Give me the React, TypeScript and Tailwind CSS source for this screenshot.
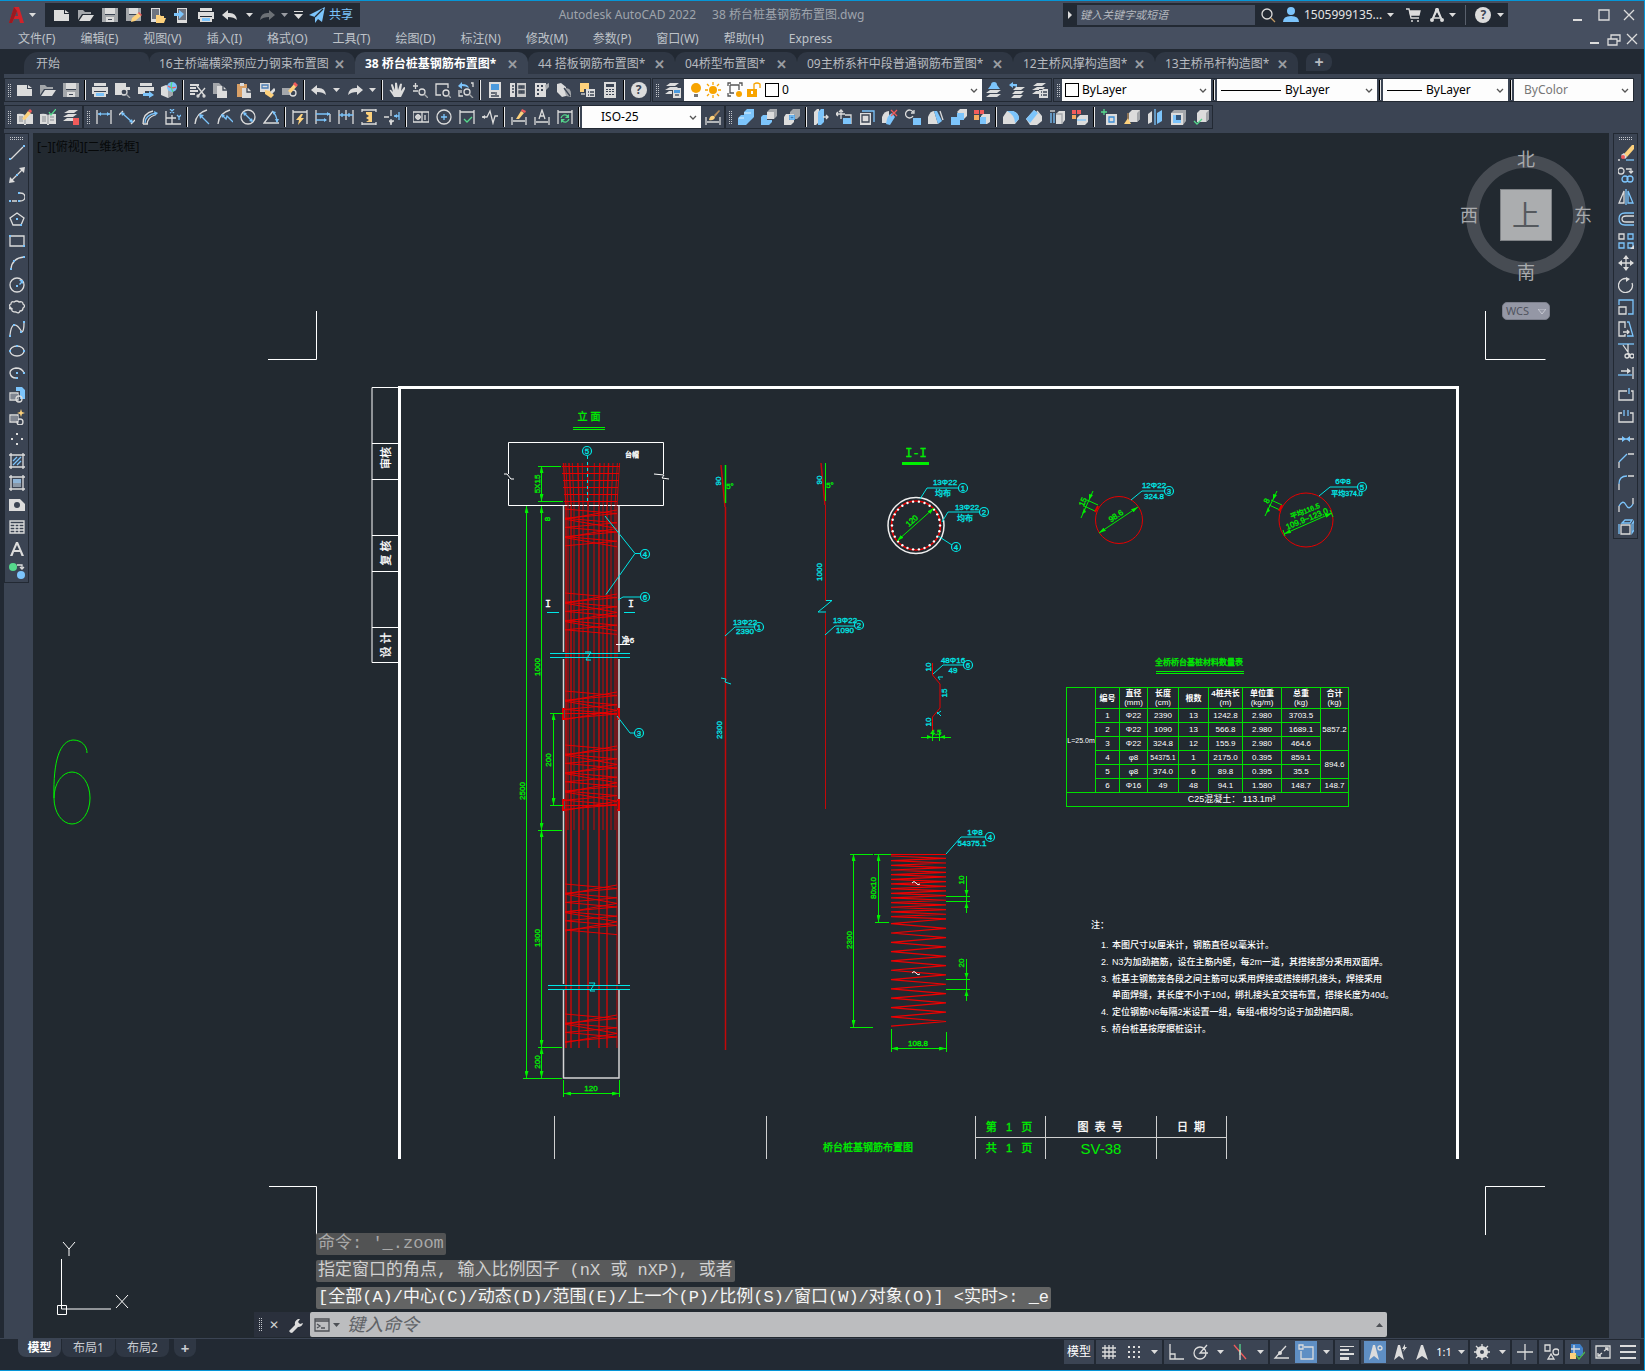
import React from "react";

type Part = ["f" | "s", string, string];

const W = "#dcdcdc";
const A = "#a4a7ab";
const B = "#7cc4fb";
const Y = "#fdd17c";
const R = "#f15b5b";
const G = "#55d88c";
const D = "#3b4453";
const O = "#f7a400";

const circ = (x: number, y: number, r: number) =>
  `M${x - r} ${y}a${r} ${r} 0 1 0 ${2 * r} 0a${r} ${r} 0 1 0 ${-2 * r} 0z`;

const icons: Record<string, Part[]> = {
  new: [["f", W, "M0 3h10v4h5v7H0zM11 3l4 3h-4z"]],
  open: [["f", A, "M0 3h5l2 2h6v2H4L0 13z"], ["f", W, "M5 8h11l-4 6H1z"]],
  save: [["f", A, "M0 1h16v14H0z"], ["f", W, "M3 1h10v6H3zM4 10h8v5H4z"], ["f", D, "M3 7h10v1H3zM6 12h4v1H6z"]],
  saveAs: [["f", A, "M0 1h15v13H0z"], ["f", W, "M3 1h9v6H3z"], ["f", D, "M3 7h9v1H3z"], ["f", Y, "M5 15l1-4 6-5 3 3-6 5z"], ["f", R, "M12 6l1-1 3 3-1 1z"]],
  openWeb: [["f", W, "M1 1h9v14H1z"], ["f", "#6e7480", "M2 2h7v10H2z"], ["f", Y, "M6 8h4l1 1h3v2h2l-2 5H6z"]],
  saveWeb: [["f", W, "M3 1h10v15H3z"], ["f", "#6e7480", "M4 2h8v11H4z"], ["f", B, "M0 6h5V3l5 4-5 5V9H0z"]],
  print: [["f", W, "M2 1h12v3H2zM0 5h16v7h-2V9H2v3H0z"], ["f", W, "M2 10h12v5H2z"], ["f", B, "M4 11h8v3H4z"]],
  preview: [["f", W, "M0 1h11v4h4v3h-3a5 5 0 0 0-6 5H0z"], ["f", D, circ(9, 10, 3)], ["s", W, circ(9, 10, 3)], ["s", A, "M11 12l4 4"]],
  publish: [["f", W, "M2 1h12v3H2zM0 5h16v4H7v3H0z"], ["f", B, "M5 11h6V9l5 4-5 3v-2H5z"]],
  globe: [["f", W, "M0 5l5-2 7 3v7l-5 3-7-3z"], ["f", A, "M7 8l5-2v7l-5 3z"], ["f", B, circ(11, 5, 5)], ["s", R, "M7 4q4 3 8 1"], ["s", G, "M11 0q-2 5 1 10"]],
  cut: [["f", W, "M0 2h9v2H0zM0 5h6v2H0zM0 8h8v2H0zM0 11h5v2H0z"], ["s", W, "M7 4l7 9M15 6l-7 8"], ["s", W, circ(8, 14, 1) + circ(14, 14, 1)]],
  copy: [["f", A, "M0 1h6l3 3v8H0z"], ["f", W, "M4 4h6l4 4v8H4z"], ["s", D, "M10 4v4h4"]],
  paste: [["f", "#d9a066", "M1 2h10v13H1z"], ["f", W, "M4 1h4v3H4zM6 6h6l3 3v7H6z"], ["s", D, "M11 6v4h4"]],
  match: [["f", W, "M1 1h10v9H1z"], ["s", "#4c7eb5", "M3 3h6v3H3z"], ["f", Y, "M6 8l5 1 4 4-3 3-6-4z"], ["f", W, "M11 10l4-4 2 2-4 4z"]],
  blockEdit: [["f", A, "M0 6h9v7H0z"], ["s", W, circ(11, 11, 3)], ["f", Y, "M6 9l6-7 3 2-6 7z"], ["f", R, "M11 2l2-2 3 3-2 2z"]],
  undo: [["f", W, "M0 8l6-5v3q8-1 9 7-3-3-9-3v3z"]],
  redo: [["f", W, "M16 8l-6-5v3q-8-1-9 7 3-3 9-3v3z"]],
  hand: [["f", W, "M5 15L1 9q-1-2 1-1l2 2-2-7q1-2 2 0l2 5V1q1-1 2 0l1 7 2-6q1-1 2 0l-1 7 3-4q2 0 1 2l-4 8z"]],
  zoomRt: [["s", W, "M1 4h5M3.500 1v6M1 9h5" + circ(10, 10, 3)], ["s", A, "M12 12l4 4"]],
  zoomWin: [["s", W, "M6 13H1V2h12v4" + circ(11, 11, 3)], ["s", A, "M13 13l3 3"]],
  zoomPrev: [["f", B, "M0 4l4-4v2q6 0 7 4-3-2-7-2v3z"], ["s", W, "M13 1h2v4M1 8v6h4M3 8v3" + circ(9, 10, 3)], ["s", A, "M11 12l4 4"]],
  props: [["f", W, "M2 0h12v16H2z"], ["f", "#4a9ade", "M4 2h8v6H4z"], ["s", D, "M4 11h4M9 10v3M4 14h8"]],
  design: [["f", W, "M0 1h5v14H0z"], ["f", "#c9c9c9", "M7 1h9v14H7z"], ["s", D, "M2 4h2M2 7h2M2 10h2M9 4h2v2H9zM12 4h2v2h-2zM9 9h2v2H9zM12 9h2v2h-2z"]],
  palette: [["f", W, "M2 1h11v14H2z"], ["f", D, "M4 3h2v2H4zM8 3h2v2H8zM4 7h2v2H4zM8 7h2v2H8zM4 11h2v2H4z"], ["f", A, "M12 3l4-2v4l-3 3z"]],
  sheet: [["f", W, "M1 2l4-1 5 4v9l-4 1-5-5z"], ["f", A, "M8 6q7-1 7 6v3l-5-1z"], ["s", D, "M8 6l6 8"]],
  markup: [["f", Y, "M1 1h9v6H5v3H1z"], ["f", W, "M7 7h9v8H7z"], ["s", D, "M9 10h1M11 10h4M9 13h1M11 13h4"], ["s", W, "M2 12h4"]],
  calc: [["f", W, "M2 0h12v16H2z"], ["f", D, "M4 2h8v3H4zM4 7h2v1H4zM7 7h2v1H7zM10 7h2v1h-2zM4 9h2v1H4zM7 9h2v1H7zM10 9h2v1h-2zM4 12h2v1H4zM7 12h2v1H7zM10 12h2v1h-2z"]],
  layerProps: [["f", W, "M5 1h9l-4 3H1zM5 5h8l-3 3H0zM4 9h3v3H0z"], ["f", W, "M8 6h8v10H8z"], ["f", "#4a9ade", "M9 8h6v3H9z"], ["s", D, "M10 13h4"]],
  layerCur: [["f", B, "M5 3a3 3 0 1 1 6 0l3 4H2z"], ["f", W, "M4 8h11l-4 3H0zM4 12h11l-4 3H0z"]],
  layerPrev: [["f", B, "M0 3l4-3v2h4v3q-2-1-4-1v2z"], ["f", W, "M7 5h9l-4 3H4zM6 9h9l-3 3H3zM5 13h9l-3 3H2z"]],
  layerState: [["f", W, "M5 1h9l-4 3H1zM5 5h8l-3 3H0zM4 9h3v3H0zM7 7h9v9H7z"], ["s", D, "M9 10h1M11 10h4M9 13h1M11 13h4"]],
  bookEdit: [["f", W, "M0 5q5-1 8 1 3-2 8-1v10H9v1H7v-1H0z"], ["s", A, "M2 8h4M2 10h4M2 12h4M8 6v9"], ["f", Y, "M5 10l6-8 3 2-6 7z"], ["f", R, "M11 2l2-2 2 2-1 2z"]],
  bookCheck: [["f", W, "M0 5q5-1 8 1 3-2 8-1v10H9v1H7v-1H0z"], ["s", A, "M2 8h4M2 10h4M2 12h4M8 6v9M10 8h4M10 11h4"], ["s", G, "M9 3l2 3 5-6"]],
  layerErase: [["f", W, "M6 1h9l-4 3H1zM5 5h9l-4 3H0zM4 9h6v3H0z"], ["f", R, "M10 9h6v7h-6z"]],
  dimLin: [["s", W, "M1 1v14M15 1v14"], ["s", B, "M2 5h12"], ["f", B, "M2 5l3-2v4zM14 5l-3-2v4z"]],
  dimAli: [["s", W, "M0 6l4-4M12 15l4-4"], ["s", B, "M3 4l10 9"], ["f", B, "M2 3l4 1-3 3zM14 14l-4-1 3-3z"]],
  dimArc: [["s", W, "M1 15q0-11 10-13M5 15q1-7 8-9M1 15h5"], ["s", B, "M3 14Q3 6 14 4"], ["f", B, "M12 2l4 2-3 3z"]],
  dimOrd: [["s", W, "M1 2v13h15M1 9h10M7 6v9"], ["s", B, "M5 0l4 4M9 0L5 4M12 6l2 2 2-2M14 8v3"]],
  dimRad: [["s", W, "M1 15Q2 4 13 1"], ["s", B, "M6 6l9 9"], ["f", B, "M5 5l5 1-4 4z"]],
  dimJog: [["s", W, "M1 15Q2 4 13 1"], ["s", B, "M5 6l4 4 1-3 6 6"], ["f", B, "M4 5l4 1-3 3z"]],
  dimDia: [["s", W, circ(8, 8, 7)], ["s", B, "M4 4l8 8"], ["f", B, "M3 3l4 1-3 3zM13 13l-4-1 3-3z"]],
  dimAng: [["s", W, "M10 2L1 14h15"], ["s", B, "M10 3q4 4 4 10"], ["f", B, "M9 2l4 1-2 3zM14 14l-2-4h4z"]],
  dimQuick: [["s", W, "M1 1v14M15 1v14M1 3h14"], ["f", Y, "M9 5l-5 6h3l-1 5 6-7H9l2-4z"]],
  dimBase: [["s", W, "M1 1v14M15 5v8"], ["s", B, "M1 5h14M1 11h10"], ["f", B, "M15 5l-3-2v4zM12 11l-3-2v4z"]],
  dimCont: [["s", W, "M1 1v14M8 1v10M15 1v14"], ["s", B, "M1 6h14M4 4v4M11 4v4"]],
  dimSpace: [["s", W, "M1 1h14M1 3V0M15 3V0M1 15h14M1 13v3M15 13v3"], ["f", Y, "M5 3h6v10H5l3-2-3-2 3-2-3-2z"]],
  dimBreak: [["s", W, "M0 8h5M7 1v6M7 10v6M5 12h5"], ["f", W, "M7 16l-2-4h4z"], ["s", B, "M10 7h5M15 3v8"], ["f", B, "M10 7l3-2v4z"]],
  tol: [["s", W, "M0 3h16v10H0zM9 3v10" + circ(5, 8, 2)], ["s", W, "M5 5v6M2 8h6M12 6v5"]],
  center: [["s", W, circ(8, 8, 7)], ["s", B, "M8 5v6M5 8h6"]],
  inspect: [["s", W, "M1 1v14M15 1v14M1 3h14"], ["s", G, "M5 10l3 3 5-5"]],
  jogLine: [["s", W, "M0 8h5l3-6 3 12 2-7h3"], ["f", W, "M0 8l3-2v4z"]],
  dimEdit: [["s", W, "M1 8v8M15 8v8M2 12h12"], ["f", Y, "M5 10l5-8 3 2-5 6z"], ["f", R, "M10 2l1-2 4 2-1 2z"]],
  dimText: [["s", W, "M1 8v8M15 8v8M2 13h12M5 10l3-9 3 9M6 7h4"]],
  dimUpd: [["s", W, "M1 1v14M15 1v14M1 3h14"], ["s", G, "M4 9q2-5 7-2M12 10q-2 5-7 2"], ["f", G, "M12 5v4H8zM4 14v-4h4z"]],
  dimSty: [["s", W, "M1 8v8M15 8v8M2 13h12"], ["f", Y, "M4 11q1-5 5-4l1 1q-1 4-6 3z"], ["f", "#b98d5a", "M9 6l5-5 1 1-5 6z"]],
  union: [["f", B, "M6 3l3-3h7v8l-3 3-2 2-3 3H0V9l3-3h3z"], ["s", "#bfe2fd", "M6 4h7M1 9h5"]],
  subtract: [["f", B, "M0 8l2-2h4v5h5v2l-3 3H0z"], ["f", A, "M6 3l3-3h7v7l-3 3H6z"], ["f", W, "M6 3h7v7H6z"]],
  intersect: [["f", A, "M6 3l3-3h7v7l-3 3H6z"], ["f", W, "M0 8l2-3h8v8l-3 3H0z"], ["f", "#3d7cb8", "M5 6h6v5H5z"], ["s", B, "M6 7h4v3H6z"]],
  extrude: [["f", W, "M1 3l3-3h2v13l-3 3H1z"], ["f", B, "M5 3l3-3h3v13l-3 3H5z"], ["s", W, "M10 8h5M13 6l2 2-2 2"]],
  moveF: [["s", W, "M5 1v9M0 5h9M3 3l2-2 2 2M2 3L0 5l2 2"], ["s", W, "M9 6h6v9"], ["f", B, "M7 9h8v6H7z"]],
  offsetF: [["s", B, "M3 2h12v11"], ["f", W, "M1 4h11v12H1z"], ["s", D, "M3 6h7v7H3z"]],
  deleteF: [["f", W, "M0 8q2-6 7-6v12H0z"], ["f", B, "M4 15Q5 6 10 4l3 4-5 8z"], ["s", R, "M9 1l6 6M15 1L9 7"]],
  rotateF: [["s", W, "M8 3a4 4 0 1 0 0 4M9 1v3H6"], ["f", B, "M8 9h8v7H8z"]],
  taperF: [["f", W, "M0 8q2-6 6-6l4 13H0z"], ["f", B, "M6 2h3l5 10-4 3z"], ["s", W, "M12 2l3 9"]],
  copyF: [["f", W, "M6 3l3-3h7v7l-3 3z"], ["f", B, "M6 4h7v7H6z"], ["f", B, "M0 8h9v8H0z"]],
  colorF: [["f", R, "M0 1h5v4H0z"], ["f", R, "M6 1h4v4H6z"], ["f", "#f3a95e", "M0 6h5v5H0z"], ["f", W, "M7 7l2-2h7v8l-3 2H7z"], ["f", B, "M6 8h6v7H6z"]],
  fillet: [["f", W, "M0 8l4-6h6q6 2 6 8l-4 5H0z"], ["f", B, "M4 2h6q6 2 6 8l-4 4q0-8-8-12z"]],
  chamfer: [["f", W, "M0 10L8 1l8 6v5l-5 4H4z"], ["f", B, "M8 1l4 3-8 10-4-4z"], ["s", W, "M11 2l4 5"]],
  copyEdge: [["s", B, "M2 4v10M5 4v10"], ["s", W, "M1 2h5"], ["f", W, "M7 5l3-3h6v9l-3 4H7z"], ["s", A, "M7 5h6v10"]],
  colorEdge: [["f", R, "M0 1h4v4H0zM5 1h4v4H5z"], ["f", "#f3a95e", "M0 6h4v4H0z"], ["f", W, "M5 9l3-3h8v7l-3 3H5z"], ["s", B, "M5 11h9"]],
  imprint: [["s", G, "M0 3h6M3 0v6"], ["f", W, "M5 5h11v11H5z"], ["s", "#3d8fd6", "M8 8h5v5H8z"]],
  clean: [["f", W, "M5 4l3-3h8v9l-3 3H5z"], ["f", A, "M13 4l3-3v9l-3 3z"], ["f", Y, "M4 9l3 6H0z"], ["s", "#b98d5a", "M4 4v6"]],
  separate: [["f", W, "M1 5l4-3v11l-4 2z"], ["f", B, "M10 4l5-3v11l-5 3z"], ["s", B, "M8 0v16"]],
  shell: [["f", A, "M1 4l3-3h12v11l-3 4H1z"], ["f", W, "M1 4h12v12H1z"], ["f", "#34567a", "M3 6h8v8H3z"], ["f", B, "M3 6h3v5h5v3H3z"]],
  check: [["f", W, "M4 4l3-3h9v9l-3 3H4z"], ["f", A, "M13 4l3-3v9l-3 3z"], ["s", G, "M1 12l3 3 5-5"]],
  line: [["s", W, "M2 14L14 2"], ["f", B, "M0 13h2v2H0zM14 0h2v2h-2z"]],
  xline: [["s", W, "M2 14L14 2"], ["f", W, "M0 16l1-6 5 5zM16 0l-1 6-5-5z"], ["f", B, "M7 7h2v2H7z"]],
  pline: [["s", W, "M3 12h5M11 4q5 0 5 4t-5 4"], ["f", B, "M0 11h2v2H0zM9 3h2v2H9zM9 11h2v2H9z"]],
  polygon: [["s", W, "M8 2l7 5-3 7H4L1 7z"], ["f", B, "M7 7h2v2H7zM11 13h2v2h-2z"]],
  rect: [["s", W, "M1 3h14v10H1z"], ["f", B, "M0 2h2v2H0zM14 12h2v2h-2z"]],
  arc: [["s", W, "M2 14Q3 3 15 2"], ["f", B, "M1 13h2v2H1zM4 5h2v2H4zM14 1h2v2h-2z"]],
  circle: [["s", W, circ(8, 8, 7)], ["f", B, "M7 8h2v2H7zM10 3h4v4l-1-1-2 2-1-1 2-2z"]],
  cloud: [["s", W, "M2 9Q-1 6 2 5q0-3 3-2 3-2 5 0 4-1 4 2 3 2 0 4 0 3-3 3-1 3-4 1-5 0-4-3-3 0-3-1z"]],
  spline: [["s", W, "M1 14Q2 5 5 4t8 7q2-1 2-9"], ["f", B, "M0 14h2v2H0zM4 3h2v2H4zM11 10h2v2h-2zM14 0h2v2h-2z"]],
  ellipse: [["s", W, "M1 8a7 5 0 1 0 14 0a7 5 0 1 0-14 0z"], ["f", B, "M0 7h2v2H0zM14 7h2v2h-2zM7 2h2v2H7z"]],
  ellArc: [["s", W, "M15 8Q13 3 7 3 1 4 1 8q1 5 6 5"], ["f", B, "M14 7h2v2h-2zM7 7h2v2H7zM7 12h2v2H7z"]],
  insert: [["s", W, "M1 6h8v7H1z"], ["f", "#7f8590", "M2 7h7v5H2z"], ["f", B, "M7 0h6l3 3v9h-5V4H7z"], ["s", W, circ(10, 12, 3)]],
  block: [["s", W, "M1 6h8v7H1z" + circ(11, 13, 3)], ["f", "#7f8590", "M2 7h7v5H2z"], ["f", Y, "M12 0l1 3 3 1-3 1-1 3-1-3-3-1 3-1z"]],
  point: [["f", W, "M7 2h2v2H7zM2 7h2v2H2zM12 7h2v2h-2zM7 12h2v2H7z"]],
  hatch: [["s", W, "M0 2h16M0 14h16M2 0v16M14 0v16"], ["s", B, "M4 8l4-4M4 12l8-8M8 12l4-4"]],
  gradient: [["s", W, "M0 2h16M0 14h16M2 0v16M14 0v16"], ["f", "#8eb4d6", "M4 4h8v4H4z"], ["f", "#8a97a6", "M4 8h8v4H4z"]],
  region: [["f", W, "M0 2h11l5 5v7H0z"], ["f", D, circ(8, 8, 3)]],
  table: [["s", W, "M1 2h14v12H1zM1 5h14M1 8h14M1 11h14M6 5v9M10 5v9"]],
  text: [["f", W, "M7 1h2l6 14h-2.500L11 11H5l-1.500 4H1zM8 4L5.700 9h4.600z"]],
  addSel: [["f", G, circ(4, 4, 4)], ["f", B, circ(12, 12, 4)], ["s", W, "M8 2h5v4M11 4l2 2 2-2"]],
  erase: [["f", Y, "M6 9l8-9h2v4l-7 8z"], ["f", W, "M6 8l3 4-2 2-4-4z"], ["f", R, circ(5, 12, 2)], ["s", B, "M8 15h8"], ["s", W, "M0 15h2"]],
  copyObj: [["s", W, circ(3, 4, 3) + "M8 2h5v4M11 4l2 2 2-2"], ["s", B, circ(7, 12, 3) + circ(12, 12, 3)]],
  mirror: [["s", W, "M6 2v12H1z"], ["s", B, "M10 2v12h5zM8 0v16"]],
  offset: [["s", B, "M16 2H7Q1 2 1 8t6 6h9"], ["s", W, "M16 5H8Q4 5 4 8t4 3h8"]],
  array: [["s", W, "M1 1h5v5H1z"], ["s", B, "M10 1h5v5h-5zM1 10h5v5H1zM10 10h5v5h-5z"], ["f", W, "M16 12v4h-4z"]],
  move: [["s", W, "M8 1v14M1 8h14"], ["f", W, "M8 0l3 4H5zM8 16l3-4H5zM0 8l4-3v6zM16 8l-4-3v6z"]],
  rotate: [["s", W, "M10 2a7 7 0 1 0 4 4"], ["f", W, "M8 0l4 2-4 3z"]],
  scale: [["s", B, "M1 6V1h14v14h-5"], ["s", W, "M1 8h7v7H1z"]],
  stretch: [["s", W, "M7 7V1H1v14h6v-2M5 11h6M9 9l2 2-2 2"], ["s", B, "M9 1h2l4 14H9"]],
  trim: [["s", B, "M0 1h16"], ["s", W, "M5 2l7 10M10 1v10" + circ(9, 13, 2) + circ(14, 13, 2)]],
  extend: [["s", W, "M15 2v12M3 6h9"], ["f", W, "M13 6L9 3v6z"], ["s", B, "M0 10h14"]],
  breakPt: [["s", W, "M9 4H1v9h14V4h-2"], ["s", B, "M11 1v6"]],
  break: [["s", W, "M4 4H1v9h14V4h-3"], ["s", B, "M6 1v6M10 1v6"]],
  join: [["s", W, "M0 8h4M12 8h4"], ["s", B, "M4 8h8"], ["f", B, "M8 8L4 5v6zM8 8l4-3v6z"]],
  chamfer2: [["s", W, "M1 15V9M10 1h6"], ["s", B, "M1 9l8-8"]],
  fillet2: [["s", W, "M1 15V9M10 1h6"], ["s", B, "M1 9q0-8 8-8"]],
  blend: [["s", W, "M1 15V9M15 1v6"], ["s", B, "M1 9q4-7 7-1t7-1"]],
  explode: [["s", W, "M3 6h9v9H3z"], ["s", B, "M1 15V5M4 4l3-3h7l-2 3zM14 5v9l2-3V2z"]],
  bulb: [["f", O, circ(8, 6, 5)], ["f", "#777", "M6 12h4v3H6z"]],
  sun: [["f", O, circ(8, 8, 4)], ["s", O, "M8 0v3M8 13v3M0 8h3M13 8h3M2 2l2 2M14 2l-2 2M2 14l2-2M14 14l-2-2"]],
  freeze: [["s", "#555", "M1 4V1h3M12 1h3v3M1 11v3h3M3 3h9v5M3 3v8h4"], ["f", O, circ(12, 12, 3)]],
  lock: [["f", O, "M1 7h10v8H1z"], ["s", O, "M8 7V2q3-2 6 0v4"], ["f", "#fff", "M5 9h2v3H5z"]],
  chevron: [["s", "#555", "M5 7l3 3 3-3"]],
  magnifier: [["s", W, circ(7, 7, 5)], ["s", "#c29a62", "M11 11l4 4"]],
  user: [["f", B, circ(8, 4, 4) + "M0 15q0-6 8-6t8 6z"]],
  cart: [["s", W, "M1 2h3l2 9h8M5 8h9l1-4H4"], ["f", W, "M4 4h11l-1 4H5z" + circ(7, 14, 1) + circ(13, 14, 1)]],
  adsk: [["s", W, "M8 3L3 13M8 3l5 10M4 11h8"], ["f", W, circ(8, 3, 2) + circ(3, 13, 2) + circ(13, 13, 2)], ["f", W, "M7 1h2l4 10h-2L8 5l-3 6H3z"]],
  plane: [["f", B, "M0 8L16 0l-3 15-4-3-3 4v-6L0 8z"], ["s", "#222933", "M6 10l8-8"]],
  min: [["f", W, "M2 11h9v2H2z"]],
  max: [["s", W, "M3 3h10v10H3z"]],
  restore: [["s", W, "M2 8h9v6H2zM5 8V4h9v6h-3"]],
  close: [["s", W, "M3 3l10 10M13 3L3 13"]],
  wrench: [["f", W, "M1 14l6-6q-1-4 3-6l2 0-2 3 2 2 3-1q-1 4-5 4l-6 6q-2 0-3-2z"]],
  grid: [["s", W, "M4 1v14M8 1v14M12 1v14M1 4h14M1 8h14M1 12h14"]],
  snap: [["f", W, "M2 2h2v2H2zM7 2h2v2H7zM12 2h2v2h-2zM2 7h2v2H2zM7 7h2v2H7zM12 7h2v2h-2zM2 12h2v2H2zM7 12h2v2H7zM12 12h2v2h-2z"]],
  ortho: [["s", W, "M2 0v15h14M2 10h5v5"]],
  polar: [["s", W, circ(7, 9, 6) + "M15 9H7l7-8"]],
  iso: [["s", R, "M2 1l12 14"], ["s", G, "M8 0v11"], ["s", W, "M8 6v10"]],
  track: [["s", W, "M13 2L2 14h14"], ["f", W, circ(7, 9, 2)]],
  osnap: [["s", W, "M6 3h9v12H3V7M1 1h4v4H1z"]],
  lweight: [["f", W, "M1 2h14v1H1zM1 5h9v2H1zM1 9h14v2H1zM1 13h9v3H1z"]],
  annoVis: [["f", W, "M6 1h2l4 15-5-4-5 4z"], ["s", W, circ(13, 4, 2)]],
  annoAuto: [["f", W, "M6 1h2l4 15-5-4-5 4zM13 0l-3 5h2l-1 3 4-5h-2z"]],
  anno: [["f", W, "M7 1h2l5 15-6-4-6 4z"]],
  gear: [["s", W, "M8 0v16M0 8h16M2 2l12 12M14 2L2 14"], ["f", W, circ(8, 8, 6)], ["f", D, circ(8, 8, 2)]],
  plus: [["s", W, "M8 0v16M0 8h16"]],
  isolate: [["s", W, "M2 1h5v6H2zM5 15l3-5 3 5z" + circ(13, 8, 3)]],
  perf: [["f", "#3f7fc8", "M2 0h9l3 4v8H2z"], ["s", W, "M2 5h9M5 1v9"], ["f", Y, "M1 9h6v6H1z"], ["s", "#4cb050", "M7 11l3 4 6-7"]],
  clean2: [["s", W, "M1 2h14v12H1zM9 7l4-3M13 7V4h-3M7 9l-4 3M3 9v3h3"]],
  menu: [["f", W, "M0 1h16v2H0zM0 7h16v2H0zM0 13h16v2H0z"]],
  terminal: [["s", "#4d5055", "M1 2h14v12H1zM1 4h14M3 7l3 2-3 2M7 11h4"]],
};

const Icon: React.FC<{ name: string }> = ({ name }) => (
  <svg viewBox="0 0 16 16" className="h-4 w-4 shrink-0" aria-hidden="true">
    {(icons[name] ?? []).map(([kind, color, d], i) =>
      kind === "f" ? (
        <path key={i} d={d} fill={color} fillRule="evenodd" />
      ) : (
        <path key={i} d={d} fill="none" stroke={color} strokeWidth={1.3} />
      )
    )}
  </svg>
);

const Caret: React.FC<{ color?: string }> = ({ color = W }) => (
  <svg viewBox="0 0 7 4" className="h-1 w-[7px] shrink-0" aria-hidden="true">
    <path d="M0 0h7L3.500 4z" fill={color} />
  </svg>
);

const HelpMark = () => (
  <span className="flex h-4 w-4 items-center justify-center rounded-full bg-[#dcdcdc] text-[12px] leading-4 font-bold text-[#3b4453]">?</span>
);

const Grip: React.FC<{ vertical?: boolean }> = ({ vertical }) => (
  <span className={vertical ? "flex h-2 w-full items-center justify-center" : "flex w-2 items-center justify-center"}>
    <svg className={vertical ? "h-[3px] w-[13px]" : "h-[13px] w-[3px]"} aria-hidden="true">
      {[0, 2, 4, 6, 8, 10, 12].map((p) => (
        <g key={p} fill="#c3c6cb">
          <rect x={vertical ? p : 0} y={vertical ? 0 : p} width="1" height="1" />
          <rect x={vertical ? p : 2} y={vertical ? 2 : p} width="1" height="1" />
        </g>
      ))}
    </svg>
  </span>
);

const Bar: React.FC<{ items: string }> = ({ items }) => (
  <>
    {items.split(" ").map((name, i) => {
      if (name === "|") {
        return (
          <span key={i} className="flex w-[6px] justify-center py-px">
            <span className="w-px bg-black" />
            <span className="w-px bg-[#e8e8e8]" />
          </span>
        );
      }
      if (name === "v") {
        return (
          <button key={i} aria-label="more" className="flex w-[13px] items-center justify-center">
            <Caret />
          </button>
        );
      }
      return (
        <button key={i} aria-label={name} className="flex w-[23px] items-center justify-center">
          {name === "help" ? <HelpMark /> : <Icon name={name} />}
        </button>
      );
    })}
  </>
);

const Group: React.FC<{ children: React.ReactNode }> = ({ children }) => (
  <div className="flex h-6 shrink-0 border border-[#222933]">
    <Grip />
    {children}
  </div>
);

type ComboProps = { label: string; value: string; width: string; pad?: string; muted?: boolean; children?: React.ReactNode };

const Combo: React.FC<ComboProps> = ({ label, value, width, pad = "pl-1", muted, children }) => (
  <div className={`flex items-center bg-[#fdfdfd] ${width} ${pad}`}>
    {children}
    <select
      aria-label={label}
      disabled={muted}
      className={`min-w-0 flex-1 appearance-none bg-transparent text-[12px] opacity-100 outline-none ${muted ? "text-[#777]" : "text-black"}`}
    >
      <option>{value}</option>
    </select>
    <Icon name="chevron" />
  </div>
);

const Swatch = () => <span className="mx-[3px] h-[14px] w-[14px] shrink-0 border border-black bg-white" />;

const menus = ["文件(F)", "编辑(E)", "视图(V)", "插入(I)", "格式(O)", "工具(T)", "绘图(D)", "标注(N)", "修改(M)", "参数(P)", "窗口(W)", "帮助(H)", "Express"];

const fileTabs = [
  { name: "16主桥端横梁预应力钢束布置图", width: "w-[206px]" },
  { name: "38 桥台桩基钢筋布置图*", width: "w-[173px]", active: true },
  { name: "44 搭板钢筋布置图*", width: "w-[147px]" },
  { name: "04桥型布置图*", width: "w-[122px]" },
  { name: "09主桥系杆中段普通钢筋布置图*", width: "w-[216px]" },
  { name: "12主桥风撑构造图*", width: "w-[142px]" },
  { name: "13主桥吊杆构造图*", width: "w-[143px]" },
];

const TitleBar = () => (
  <header className="bg-[#464f60]">
    <div className="flex h-[27px] items-center justify-between">
      <div className="flex h-6 items-center">
        <button aria-label="Application menu" className="flex w-[45px] items-center gap-1 pl-[9px]">
          <svg viewBox="0 0 16 18" className="h-[18px] w-4" aria-hidden="true">
            <path d="M5 1h5l5 16h-4l-1-4H5l-2 4H0zM8 5L6 10h3z" fill="#d2232a" fillRule="evenodd" />
            <path d="M5 1l3 4-5 12H0z" fill="#9c1a20" />
          </svg>
          <Caret />
        </button>
        <div className="flex h-6 w-[315px] items-center gap-2 bg-[#222933] pl-[9px]">
          {["new", "open", "save", "saveAs", "openWeb", "saveWeb", "print", "undo"].map((n) => (
            <button key={n} aria-label={n}><Icon name={n} /></button>
          ))}
          <span className="flex items-center gap-[6px] text-[12px] whitespace-nowrap text-[#7cc4fb]">
            <Caret />
            <span className="opacity-40"><Icon name="redo" /></span>
            <Caret color="#9a9da3" />
            <svg viewBox="0 0 9 8" className="h-2 w-[9px]" aria-hidden="true"><path d="M0 0h9v1H0zM0 3h9L4.500 8z" fill={W} /></svg>
            <button className="flex items-center gap-1"><Icon name="plane" />共享</button>
          </span>
        </div>
      </div>
      <div className="flex gap-4 text-[12px] text-[#9fa4ac]">
        <span>Autodesk AutoCAD 2022</span>
        <span>38 桥台桩基钢筋布置图.dwg</span>
      </div>
      <div className="flex h-6 items-center">
        <div className="flex h-6 w-[445px] items-center bg-[#222933] text-[12px] text-[#e4e4e4]">
          <svg viewBox="0 0 4 8" className="mx-[5px] h-2 w-1" aria-hidden="true"><path d="M0 0l4 4-4 4z" fill={W} /></svg>
          <input
            aria-label="Search"
            placeholder="键入关键字或短语"
            className="h-5 w-[178px] bg-[#464f60] px-[3px] text-[11px] italic outline-none placeholder:text-[#b4b8be]"
          />
          <button aria-label="Find" className="ml-[5px]"><Icon name="magnifier" /></button>
          <button className="ml-[7px] flex items-center gap-[5px]"><Icon name="user" />1505999135...<Caret /></button>
          <button aria-label="Store" className="ml-[11px]"><Icon name="cart" /></button>
          <button aria-label="Apps" className="ml-2 flex items-center gap-1"><Icon name="adsk" /><Caret /></button>
          <span className="mx-[9px] h-5 w-px bg-[#59606c]" />
          <button aria-label="Help" className="flex items-center gap-[6px]"><HelpMark /><Caret /></button>
        </div>
        <div className="flex w-[136px] justify-end gap-[9px] pr-[7px]">
          <button aria-label="Minimize" className="pt-[2px]"><Icon name="min" /></button>
          <button aria-label="Maximize"><Icon name="max" /></button>
          <button aria-label="Close"><Icon name="close" /></button>
        </div>
      </div>
    </div>
    <nav className="flex h-[21px] items-center gap-px pl-[6px] text-[12px] text-[#bfc3c9]">
      {menus.map((m) => (
        <button key={m} className="px-3 leading-4 whitespace-nowrap">{m}</button>
      ))}
      <div className="ml-auto flex gap-[2px] pr-1">
        <button aria-label="Minimize drawing"><Icon name="min" /></button>
        <button aria-label="Restore drawing"><Icon name="restore" /></button>
        <button aria-label="Close drawing"><Icon name="close" /></button>
      </div>
    </nav>
  </header>
);

const FileTabs = () => (
  <nav className="flex h-[25px] items-end bg-[#222933] pl-6 text-[12px] text-[#b8bbc0]">
    <button className="h-[22px] w-[125px] rounded-tl-[14px] rounded-tr-[8px] bg-[#2f3744] pt-px pl-3 text-left">开始</button>
    {fileTabs.map((t) => (
      <div
        key={t.name}
        className={`flex h-[22px] items-center justify-between rounded-t-[10px] pt-[2px] pr-[10px] pl-[10px] whitespace-nowrap ${t.width} ${
          t.active ? "bg-[#3b4453] font-bold text-white" : "bg-[#2f3744]"
        }`}
      >
        <button>{t.name}</button>
        <button aria-label="Close tab" className="text-[13px] leading-4 font-bold text-[#9a9da2]">✕</button>
      </div>
    ))}
    <button aria-label="New tab" className="ml-2 h-[18px] w-[26px] self-center rounded-t-[8px] rounded-br-[8px] bg-[#2f3744] text-[16px] leading-[18px] font-bold">+</button>
  </nav>
);

const Toolbars = () => (
  <div className="flex flex-col gap-[3px] bg-[#3b4453] py-1">
    <div className="flex gap-px">
      <Group>
        <Bar items="new open save | print preview publish globe | cut copy paste match blockEdit | undo v redo v | hand zoomRt zoomWin zoomPrev | props design palette sheet markup calc | help" />
      </Group>
      <Group>
        <Bar items="layerProps" />
        <Combo label="Layer" value="0" width="w-[298px]">
          <span className="flex items-center gap-px">
            <Icon name="bulb" />
            <Icon name="sun" />
            <span className="w-1" />
            <Icon name="freeze" />
            <span className="w-px" />
            <Icon name="lock" />
          </span>
          <Swatch />
        </Combo>
        <Bar items="layerCur layerPrev layerState" />
      </Group>
      <Group>
        <Combo label="Color" value="ByLayer" width="w-[149px]" pad="pl-0">
          <Swatch />
        </Combo>
        <Bar items="|" />
        <Combo label="Linetype" value="ByLayer" width="w-[160px]">
          <span className="mr-1 h-px w-[60px] bg-black" />
        </Combo>
        <Bar items="|" />
        <Combo label="Lineweight" value="ByLayer" width="w-[125px]">
          <span className="mr-1 h-px w-[35px] bg-black" />
        </Combo>
        <Bar items="|" />
        <Combo label="Plot style" value="ByColor" width="w-[119px]" pad="pl-[10px]" muted />
      </Group>
    </div>
    <div className="flex">
      <Group>
        <Bar items="bookEdit bookCheck layerErase" />
      </Group>
      <Group>
        <Bar items="dimLin dimAli dimArc dimOrd | dimRad dimJog dimDia dimAng | dimQuick dimBase dimCont dimSpace dimBreak | tol center inspect jogLine | dimEdit dimText dimUpd |" />
        <Combo label="Dimension style" value="ISO-25" width="w-[119px]" pad="pl-[19px]" />
        <Bar items="dimSty" />
      </Group>
      <Group>
        <Bar items="union subtract intersect | extrude moveF offsetF deleteF rotateF taperF copyF colorF | fillet chamfer copyEdge colorEdge | imprint clean separate shell check" />
      </Group>
    </div>
  </div>
);

const SideBar: React.FC<{ items: string }> = ({ items }) => (
  <div className="flex w-[25px] flex-col border border-[#222933]">
    <Grip vertical />
    {items.split(" ").map((n) => (
      <button key={n} aria-label={n} className="flex h-[22px] items-center justify-center">
        <Icon name={n} />
      </button>
    ))}
  </div>
);

const GREEN = "#00f000";
const CYAN = "#00e6e6";
const RED = "#e60000";

type TProps = { x: number; y: number; c?: string; r?: number; s?: number; mono?: boolean; children: React.ReactNode };

const T: React.FC<TProps> = ({ x, y, c = GREEN, r, s = 8, mono, children }) => (
  <text
    x={x}
    y={y}
    fill={c}
    stroke={c}
    strokeWidth={0.3}
    fontSize={s}
    className={mono ? "font-['Liberation_Mono',monospace]" : undefined}
    textAnchor="middle"
    dominantBaseline="central"
    transform={r ? `rotate(${r} ${x} ${y})` : undefined}
  >
    {children}
  </text>
);

const P: React.FC<{ d: string; c?: string; w?: number; arrows?: boolean }> = ({ d, c = GREEN, w = 1, arrows }) => (
  <path
    d={d}
    fill="none"
    stroke={c}
    strokeWidth={w}
    markerStart={arrows ? "url(#arrow)" : undefined}
    markerEnd={arrows ? "url(#arrow)" : undefined}
  />
);

const Tag: React.FC<{ x: number; y: number; n: number }> = ({ x, y, n }) => (
  <g>
    <circle cx={x} cy={y} r={4.500} fill="none" stroke={CYAN} strokeWidth={1.2} />
    <T x={x} y={y} c={CYAN}>{n}</T>
  </g>
);

const zigzag = (x1: number, x2: number, top: number, bottom: number, step: number) => {
  let d = `M${x1} ${top}`;
  let right = true;
  for (let y = top + step; y <= bottom; y += step) {
    d += `L${right ? x2 : x1} ${y}`;
    right = !right;
  }
  return d;
};

const shortBars = [568, 574, 583, 594, 603, 611, 615];
const longBars = [566, 571, 579, 588, 599, 607, 617];
const hoops = [[509, 548], [593, 637], [691, 721], [745, 812], [884, 937], [1014, 1045]];

const Elevation = () => (
  <g>
    <T x={589} y={416} s={10}>立 面</T>
    <P d="M573 427.500h32M573 429.500h32" />
    <P c="#fff" d="M508.500 474V442.500h155V474M663.500 480v25.500h-155V479M504 474h3l4 5h3M654 474l10 1-2 3 7 1" />
    <P c="#d4d4d4" w={1.5} d="M563.500 506V652M563.500 659V984M563.500 990v88h55.500v-88M619 506V652M619 659V984" />
    <T x={632} y={454} c="#fff" s={7}>台帽</T>
    <g stroke="#c40808" strokeWidth="1">
      {shortBars.map((x) => (
        <path key={x} d={`M${x + (x - 591) / 10} 463L${x} 505V830`} fill="none" />
      ))}
      {longBars.map((x) => (
        <path key={x} d={`M${x + (x - 591) / 10} 463L${x} 505V1048`} fill="none" strokeWidth={x === 617 ? 1 : 1.5} />
      ))}
    </g>
    <P c={RED} d="M562 466.500h58M562 473.500h57M563 480.500h56M563 487.500h55M564 494.500h54M564 501.500h53" />
    <path d="M565 505.500h53" stroke="#fff" strokeDasharray="2 2" />
    {hoops.map(([a, b]) => (
      <g key={a}>
        <P c={RED} d={zigzag(565, 617, a, b, 4.6)} />
        <P c={RED} d={zigzag(617, 565, a + 1, b, 9.2)} />
      </g>
    ))}
    <P c={RED} w={2} d="M565 709h-2v10h2M617 709h2v10h-2M565 800h-2v10h2M617 800h2v10h-2" />
    <P c={RED} d="M565 713.500h52M565 805.500h52" />
    <path d="M587.500 456v46" stroke={CYAN} strokeDasharray="3 3" />
    <P c={CYAN} d="M550 653.500h80M550 657.500h80M585 652h6l-5 8h5M548 985.500h82M548 989.500h82M589 983h6l-5 8h5" />
    <P c={CYAN} d="M605 516l30 37.500-29 41M635 553.500h5M618 600l5-3h17M617 716l13 17h5M547 612.500h12M624 612.500h11" />
    <Tag x={587} y={451} n={5} />
    <Tag x={645} y={554} n={4} />
    <Tag x={645} y={597} n={6} />
    <Tag x={639} y={733} n={3} />
    <T x={548} y={604} c="#fff" s={10} mono>I</T>
    <T x={631} y={604} c="#fff" s={10} mono>I</T>
    <T x={628} y={640} c="#fff">净6</T>
    <P c="#fff" d="M616 644.500h14" />
    <P arrows d="M526.500 506V1078" />
    <P arrows d="M541.500 466V501" />
    <P arrows d="M541.500 506V830" />
    <P arrows d="M541.500 830V1047" />
    <P arrows d="M541.500 1047V1078" />
    <P arrows d="M553.500 713V805" />
    <P arrows d="M564 1093.500h55" />
    <P d="M538 466.500h23M538 501.500h25M538 830.500h24M538 1047.500h24M523 1078.500h39M550 713.500h13M550 805.500h13M563.500 1080v17M619.500 1080v17" />
    <T x={522} y={791} r={-90}>2500</T>
    <T x={537} y={484} r={-90}>5X15</T>
    <T x={547} y={519} r={-90}>8</T>
    <T x={537} y={667} r={-90}>1000</T>
    <T x={537} y={938} r={-90}>1300</T>
    <T x={537} y={1062} r={-90}>200</T>
    <T x={548} y={760} r={-90}>200</T>
    <T x={591} y={1088}>120</T>
  </g>
);

const BarDetails = () => (
  <g>
    <P c="#c40808" w={1.5} d="M725.500 507V1050" />
    <P c="#c40808" w={1.5} d="M721 465l4 42" />
    <P w={1.5} d="M725.500 465v38" />
    <P c={CYAN} d="M725 636l10-9h20M721 678l5 1-1 3 6 2" />
    <T x={718} y={481} r={-90} c={CYAN}>90</T>
    <T x={730} y={486}>5°</T>
    <T x={745} y={622} c={CYAN}>13Φ22</T>
    <T x={745} y={631} c={CYAN}>2390</T>
    <T x={719} y={730} r={-90} c={CYAN}>2300</T>
    <Tag x={759} y={627} n={1} />

    <P c="#c40808" d="M825.500 505V601M825.500 613V809" />
    <P c="#c40808" w={1.5} d="M821 463l4 42" />
    <P d="M825.500 463v38" />
    <P c={CYAN} d="M825 635l10-9h20M826 600.500h6l-14 11.500h8" />
    <T x={819} y={480} r={-90} c={CYAN}>90</T>
    <T x={830} y={485}>5°</T>
    <T x={819} y={572} r={-90} c={CYAN}>1000</T>
    <T x={845} y={620} c={CYAN}>13Φ22</T>
    <T x={845} y={630} c={CYAN}>1090</T>
    <Tag x={859} y={625} n={2} />

    <P c={RED} d="M932.500 663v12l7.500 9v24l-7.500 9v18" />
    <P c={CYAN} d="M933 674l10-9h21M943 677h-5l2 3M937 712l4 4M941 711l-4 3" />
    <T x={928} y={667} r={-90} c={CYAN}>10</T>
    <T x={944} y={693} r={-90} c={CYAN}>15</T>
    <T x={928} y={722} r={-90} c={CYAN}>10</T>
    <T x={953} y={660} c={CYAN}>48Φ16</T>
    <T x={953} y={670} c={CYAN}>49</T>
    <Tag x={968} y={665} n={6} />
    <P d="M921 737.500h30M932.500 731v10M939.500 731v10" />
    <path d="M932 737l-5-2v4zM940 737l5-2v4z" fill={GREEN} />
    <T x={936} y={732}>4.5</T>
  </g>
);

const dots = Array.from({ length: 26 }, (_, i) => (i * Math.PI * 2) / 26);

const Sections = () => (
  <g>
    <T x={916} y={454} s={12} mono>I-I</T>
    <P w={3} d="M902 463.500h27" />
    <circle cx="916" cy="525.500" r="28" fill="none" stroke="#f0f0f0" strokeWidth="1.500" />
    <circle cx="916" cy="525.500" r="24.500" fill="none" stroke={RED} strokeWidth="1.500" />
    {dots.map((a) => (
      <circle key={a} cx={916 + 24 * Math.cos(a)} cy={525.5 + 24 * Math.sin(a)} r="1.200" fill="#fff" />
    ))}
    <P arrows d="M897 541l37-33" />
    <T x={912} y={521} r={-42}>120</T>
    <P c={CYAN} d="M920 499l7-11h31M942 522l6-10h32M938 536l14 9" />
    <T x={945} y={482} c={CYAN}>13Φ22</T>
    <T x={943} y={493} c={CYAN}>均布</T>
    <T x={967} y={507} c={CYAN}>13Φ22</T>
    <T x={965} y={518} c={CYAN}>均布</T>
    <Tag x={963} y={488} n={1} />
    <Tag x={984} y={512} n={2} />
    <Tag x={956} y={547} n={4} />

    <circle cx="1119" cy="520" r="23.500" fill="none" stroke={RED} />
    <P arrows d="M1099 533l39-26" />
    <T x={1116} y={516} r={-34}>98.6</T>
    <P d="M1081 518l12-27M1087 500l11 5M1084 506l11 5" />
    <path d="M1089 500l4-5-4-1zM1084 508l-2 6 4-2z" fill={GREEN} />
    <T x={1083} y={502} r={-65}>15</T>
    <P c={RED} w={2} d="M1098 506l-3 6" />
    <P c={CYAN} d="M1131 500l11-9h23" />
    <T x={1154} y={485} c={CYAN}>12Φ22</T>
    <T x={1154} y={496} c={CYAN}>324.8</T>
    <Tag x={1169} y={491} n={3} />

    <circle cx="1306" cy="520" r="27" fill="none" stroke={RED} />
    <P arrows d="M1284 534l48-21" />
    <T x={1305} y={511} r={-22} s={7}>平均116.5</T>
    <T x={1307} y={519} r={-22}>109.9~123.0</T>
    <P d="M1265 516l12-25M1271 500l11 5M1269 505l11 5M1283 530l2 6M1330 510l3 7" />
    <path d="M1273 500l4-5-4-1zM1268 507l-2 6 4-2z" fill={GREEN} />
    <T x={1267} y={501} r={-65}>8</T>
    <P c={RED} w={2} d="M1282 505l-3 6" />
    <P c={CYAN} d="M1319 496l11-9h28" />
    <T x={1343} y={481} c={CYAN}>6Φ8</T>
    <T x={1347} y={493} c={CYAN} s={7}>平均374.0</T>
    <Tag x={1362} y={487} n={5} />
  </g>
);

const Spiral = () => (
  <g>
    <P c="#f00000" w={1.2} d={"M891 854.500h55" + zigzag(891, 946, 856, 921, 2.33)} />
    <P c="#f00000" w={1.2} d={zigzag(946, 891, 919, 1029, 4.66)} />
    <P c="#fff" d="M912 883q2-3 4 0t4 1M912 973q2-3 4 0t4 1" />
    <P arrows d="M853.500 854V1027" />
    <P arrows d="M878.500 854v68" />
    <P arrows d="M891 1048.500h55" />
    <P d="M850 854.500h23M874 854.500h17M875 922.500h14M850 1027.500h23M891.500 1029v23M946.500 1032v20" />
    <P d="M946 896.500h24M946 901.500h24M946 979.500h24M946 989.500h24M966.500 876v37M966.500 959v42" />
    <path d="M966.500 896l-2-6h4zM966.500 902l-2 6h4zM966.500 979l-2-6h4zM966.500 990l-2 6h4z" fill={GREEN} />
    <T x={849} y={940} r={-90}>2300</T>
    <T x={873} y={888} r={-90}>80x10</T>
    <T x={961} y={880} r={-90}>10</T>
    <T x={961} y={963} r={-90}>20</T>
    <T x={918} y={1043}>108.8</T>
    <P c={CYAN} d="M946 854l15-17h25" />
    <T x={975} y={832} c={CYAN}>1Φ8</T>
    <T x={972} y={843} c={CYAN}>54375.1</T>
    <Tag x={990} y={837} n={4} />
  </g>
);

const SheetFrame = () => (
  <g>
    <P c="#fff" d="M316.500 311v48.500H268M1485.500 311v48.500h60M269 1186.500h47.500V1235M1545 1186.500h-59.500V1235" />
    <P c="#fff" w={3} d="M399.500 1159V387.500h1058V1159" />
    <P c="#fff" d="M400 387.500h-28v275h28M372 443.500h28M372 479.500h28M372 535.500h28M372 571.500h28M372 627.500h28" />
    <T x={386} y={458} r={-90} c="#fff" s={11}>审核</T>
    <T x={386} y={553} r={-90} c="#fff" s={11}>复 核</T>
    <T x={386} y={645} r={-90} c="#fff" s={11}>设 计</T>
    <P c="#d0d0d0" w={1} d="M554.500 1116v43M766.500 1116v43M975.500 1116v43M1045.500 1116v43M1156.500 1116v43M1226.500 1116v43M975 1137.500h251" />
    <T x={868} y={1147} s={10}>桥台桩基钢筋布置图</T>
    <T x={1009} y={1127} s={11}>第&nbsp;&nbsp; 1 &nbsp;&nbsp;页</T>
    <T x={1009} y={1148} s={11}>共&nbsp;&nbsp; 1 &nbsp;&nbsp;页</T>
    <T x={1100} y={1127} s={11} c="#fff">图&nbsp; 表 &nbsp;号</T>
    <text x={1101} y={1148} fontSize={15} fill={GREEN} textAnchor="middle" dominantBaseline="central">SV-38</text>
    <T x={1191} y={1127} s={11} c="#fff">日&nbsp; 期</T>
    <ellipse cx="72" cy="798" rx="18" ry="26" fill="none" stroke={GREEN} />
    <P d="M54 798C53 760 60 741 73 740 82 740 87 746 87 753" />
    <P c="#fff" d="M61.500 1259v50h49.500M57.500 1305.500h9v9h-9zM63 1242l6 7 6-7M69 1249v7M116 1295l12 13M128 1295l-12 13" />
  </g>
);

const rows = [
  ["1", "Φ22", "2390", "13", "1242.8", "2.980", "3703.5"],
  ["2", "Φ22", "1090", "13", "566.8", "2.980", "1689.1"],
  ["3", "Φ22", "324.8", "12", "155.9", "2.980", "464.6"],
  ["4", "φ8", "54375.1", "1", "2175.0", "0.395", "859.1"],
  ["5", "φ8", "374.0", "6", "89.8", "0.395", "35.5"],
  ["6", "Φ16", "49", "48", "94.1", "1.580", "148.7"],
];

const totals: Record<number, { span: number; value: string }> = {
  0: { span: 3, value: "5857.2" },
  3: { span: 2, value: "894.6" },
  5: { span: 1, value: "148.7" },
};

const heads = [["编号"], ["直径", "(mm)"], ["长度", "(cm)"], ["根数"], ["4桩共长", "(m)"], ["单位重", "(kg/m)"], ["总重", "(kg)"], ["合计", "(kg)"]];

const MaterialTable = () => (
  <table className="w-[282px] table-fixed border-collapse text-center text-[8px] leading-[9px] whitespace-nowrap text-white [&_td]:border [&_td]:border-[#00e000] [&_td]:p-0 [&_th]:border [&_th]:border-[#00e000] [&_th]:p-0">
    <colgroup>
      <col className="w-[29px]" />
      <col className="w-[24px]" />
      <col className="w-[28px]" />
      <col className="w-[31px]" />
      <col className="w-[30px]" />
      <col className="w-[34px]" />
      <col className="w-[39px]" />
      <col className="w-[39px]" />
      <col className="w-[28px]" />
    </colgroup>
    <tbody>
      <tr className="h-[21px]">
        <th rowSpan={7} className="text-[7px] font-normal">L=25.0m</th>
        {heads.map((h) => (
          <th key={h[0]} className="text-[8px] font-bold">
            {h[0]}
            {h[1] && <span className="block font-normal">{h[1]}</span>}
          </th>
        ))}
      </tr>
      {rows.map((r, i) => (
        <tr key={r[0]} className="h-[14px]">
          {r.map((v, j) => (
            <td key={j} className={v.length > 6 ? "text-[7px]" : undefined}>{v}</td>
          ))}
          {totals[i] && <td rowSpan={totals[i].span}>{totals[i].value}</td>}
        </tr>
      ))}
      <tr className="h-[14px]">
        <td colSpan={9} className="text-[9px]"><span className="pl-[48px]">C25混凝土： 113.1m³</span></td>
      </tr>
    </tbody>
  </table>
);

const Notes = () => (
  <div className="text-[9px] leading-4 font-medium whitespace-nowrap text-white">
    <p className="pb-1">注：</p>
    <ol className="flex list-none flex-col gap-px pl-[10px]">
      <li className="flex"><span className="w-[11px]">1.</span>本图尺寸以厘米计，钢筋直径以毫米计。</li>
      <li className="flex"><span className="w-[11px]">2.</span>N3为加劲箍筋，设在主筋内壁，每2m一道，其搭接部分采用双面焊。</li>
      <li className="flex">
        <span className="w-[11px]">3.</span>
        <span>
          桩基主钢筋笼各段之间主筋可以采用焊接或搭接绑孔接头，焊接采用
          <br />
          单面焊缝，其长度不小于10d，绑扎接头宜交错布置，搭接长度为40d。
        </span>
      </li>
      <li className="flex"><span className="w-[11px]">4.</span>定位钢筋N6每隔2米设置一组，每组4根均匀设于加劲箍四周。</li>
      <li className="flex"><span className="w-[11px]">5.</span>桥台桩基按摩擦桩设计。</li>
    </ol>
  </div>
);

const Drawing = () => (
  <svg className="absolute inset-0 h-full w-full font-['Liberation_Sans','Noto_Sans_CJK_SC',sans-serif]">
    <defs>
      <marker id="arrow" viewBox="0 0 7 4" refX="7" refY="2" markerWidth="7" markerHeight="4" markerUnits="userSpaceOnUse" orient="auto-start-reverse">
        <path d="M0 0l7 2-7 2z" fill={GREEN} />
      </marker>
    </defs>
    <g transform="translate(-33 -133)">
      <SheetFrame />
      <Elevation />
      <BarDetails />
      <Sections />
      <Spiral />
      <T x={1199} y={662}>全桥桥台基桩材料数量表</T>
      <P d="M1156 671.500h88M1156 673.500h88" />
      <foreignObject x="1066" y="687" width="290" height="124">
        <MaterialTable />
      </foreignObject>
      <foreignObject x="1091" y="917" width="320" height="130">
        <Notes />
      </foreignObject>
    </g>
  </svg>
);

const ViewCube = () => (
  <div className="absolute top-4 right-[17px] flex w-[132px] flex-col items-center text-[18px] leading-5 text-[#a9abae]">
    <svg viewBox="0 0 120 120" className="absolute top-[6px] h-[120px] w-[120px]" aria-hidden="true">
      <circle cx="60" cy="60" r="53.500" fill="none" stroke="#474c53" strokeWidth="13" />
    </svg>
    <button className="relative">北</button>
    <div className="relative flex w-full items-center justify-between pt-5 pb-[21px]">
      <button>西</button>
      <button className="h-[52px] w-[52px] border border-[#7f8286] bg-[#abadaf] text-[28px] text-[#55595e]">上</button>
      <button>东</button>
    </div>
    <button className="relative">南</button>
    <button className="mt-5 flex h-[18px] w-12 items-center justify-between rounded-[5px] border border-[#7c7f8c] bg-[#9497a5] px-[3px] text-[11px] text-[#50535e]">
      WCS
      <svg viewBox="0 0 8 5" className="h-[5px] w-2" aria-hidden="true"><path d="M0 0h8L4 5z" fill="none" stroke="#c6c8d2" /></svg>
    </button>
  </div>
);

const CommandLine = () => (
  <div className="relative mr-[222px] ml-[221px] flex flex-col gap-[3px]">
    <div className="flex flex-col items-start gap-[5px] pl-[62px] font-['Liberation_Mono','Noto_Sans_CJK_SC',monospace] text-[17px] leading-[22px] whitespace-pre">
      <p className="h-[22px] rounded-[2px] bg-[#525354] px-[2px] text-[#a9a9a9]">命令: '_.zoom</p>
      <p className="h-[22px] rounded-[2px] bg-[#595a5b] px-[2px] text-[#d0d0d0]">指定窗口的角点, 输入比例因子 (nX 或 nXP), 或者</p>
      <p className="h-[22px] rounded-[2px] bg-[#636464] px-[2px] text-[#f4f4f4]">[全部(A)/中心(C)/动态(D)/范围(E)/上一个(P)/比例(S)/窗口(W)/对象(O)] &lt;实时&gt;: _e</p>
    </div>
    <div className="mb-px flex h-[25px]">
      <div className="flex w-14 items-center gap-1 bg-[#2a303c] pl-[2px]">
        <Grip />
        <button aria-label="Close command line" className="flex h-4 w-3 items-center justify-center text-[12px] text-[#d0d0d0]">✕</button>
        <button aria-label="Customize" className="ml-1"><Icon name="wrench" /></button>
      </div>
      <div className="flex flex-1 items-center gap-[3px] rounded-[2px] bg-[#bcbdbf] px-1">
        <Icon name="terminal" />
        <Caret color="#4d5055" />
        <input
          aria-label="Command"
          placeholder="键入命令"
          className="h-6 min-w-0 flex-1 pb-[3px] pl-1 font-['Noto_Sans_CJK_SC',sans-serif] text-[18px] leading-5 italic outline-none placeholder:text-[#606367]"
        />
        <button aria-label="History" className="rotate-180"><Caret color="#4d5055" /></button>
      </div>
    </div>
  </div>
);

const Chip: React.FC<{ children: React.ReactNode; width: string }> = ({ children, width }) => (
  <div className={`flex h-6 items-center justify-around bg-[#3b4453] ${width}`}>{children}</div>
);

const StatusBar = () => (
  <footer className="flex h-8 justify-between border-t border-[#3b4453] bg-[#222933] text-[12px] text-[#c9ccd1]">
    <div className="flex h-[18px] gap-px pl-[18px] leading-4">
      <button className="w-[43px] rounded-b-[8px] bg-[#3b4453] font-bold text-white">模型</button>
      <button className="w-[53px] rounded-b-[8px] bg-[#2f3744]">布局1</button>
      <button className="w-[53px] rounded-b-[8px] bg-[#2f3744]">布局2</button>
      <button aria-label="New layout" className="ml-1 w-[22px] rounded-b-[8px] bg-[#2f3744] text-[15px] font-bold">+</button>
    </div>
    <div className="flex gap-[2px] pt-px pr-1">
      <Chip width="w-[30px]"><button className="text-white">模型</button></Chip>
      <Chip width="w-[66px]"><Icon name="grid" /><Icon name="snap" /><Caret /></Chip>
      <Chip width="w-[104px]"><Icon name="ortho" /><Icon name="polar" /><Caret /><Icon name="iso" /><Caret /></Chip>
      <Chip width="w-[63px]">
        <Icon name="track" />
        <span className="flex h-[22px] w-[22px] items-center justify-center bg-[#5f8fc4]"><Icon name="osnap" /></span>
        <Caret />
      </Chip>
      <Chip width="w-[24px]"><Icon name="lweight" /></Chip>
      <Chip width="w-[107px]">
        <span className="flex h-[22px] w-[22px] items-center justify-center bg-[#5f8fc4]"><Icon name="annoVis" /></span>
        <Icon name="annoAuto" />
        <Icon name="anno" />
        <button className="text-[11px] text-white">1:1</button>
        <Caret />
      </Chip>
      <Chip width="w-[40px]"><Icon name="gear" /><Caret /></Chip>
      <Chip width="w-[25px]"><Icon name="plus" /></Chip>
      <Chip width="w-[24px]"><Icon name="isolate" /></Chip>
      <Chip width="w-[24px]"><Icon name="perf" /></Chip>
      <Chip width="w-[49px]"><Icon name="clean2" /><Icon name="menu" /></Chip>
    </div>
  </footer>
);

const App: React.FC = () => {
  return (
    <div className="flex min-h-screen flex-col overflow-hidden border-t border-r border-b border-[#0696d7] bg-[#222933] font-['Noto_Sans','Noto_Sans_CJK_SC',sans-serif]">
      <TitleBar />
      <FileTabs />
      <div className="flex flex-1 flex-col border-r-[3px] border-l-4 border-[#222933]">
        <Toolbars />
        <div className="flex flex-1 bg-[#3b4453]">
          <aside className="w-[29px] shrink-0">
            <SideBar items="line xline pline polygon rect arc circle cloud spline ellipse ellArc insert block point hatch gradient region table text addSel" />
          </aside>
          <main className="relative flex min-w-0 flex-1 flex-col justify-between overflow-hidden bg-[#222930]">
            <p className="pt-[6px] pl-1 text-[12px] leading-4 text-[#060809]">[−][俯视][二维线框]</p>
            <Drawing />
            <ViewCube />
            <CommandLine />
          </main>
          <aside className="w-[32px] shrink-0 pl-1">
            <SideBar items="erase copyObj mirror offset array move rotate scale stretch trim extend breakPt break join chamfer2 fillet2 blend explode" />
          </aside>
        </div>
      </div>
      <StatusBar />
    </div>
  );
};

export default App;
